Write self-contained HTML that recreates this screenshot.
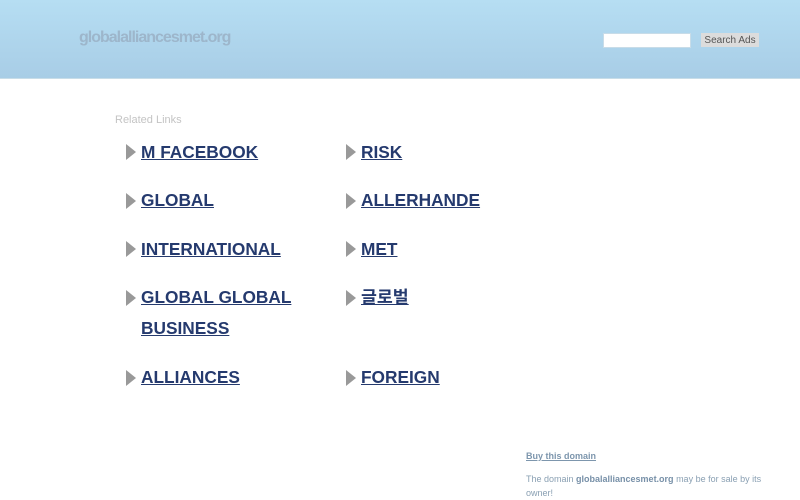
<!DOCTYPE html>
<html><head><meta charset="utf-8"><style>
body{margin:0;width:800px;height:500px;background:#fff;font-family:"Liberation Sans","Noto Sans CJK KR",sans-serif;position:relative;overflow:hidden}
.hd{position:absolute;left:0;top:0;width:800px;height:78px;background:linear-gradient(#b6def3,#a8cde6);border-bottom:1px solid #c8dde8}
.logo{position:absolute;left:79px;top:29px;font-size:16px;font-weight:bold;color:#9db6cb;letter-spacing:-1px}
.inp{position:absolute;left:603px;top:33px;width:86px;height:13px;background:#fff;border:1px solid #c8dce8}
.btn{position:absolute;left:701px;top:33px;width:58px;height:14px;background:#dcdcdc;font-size:10px;color:#555;text-align:center;line-height:16px}
.rl{position:absolute;left:115px;top:114px;font-size:11px;color:#c4c4c4}
.l{position:absolute;font-size:17.3px;font-weight:bold;color:#253a6e;text-decoration:underline;line-height:31px}
.a{position:absolute;width:0;height:0;border-top:8px solid transparent;border-bottom:8px solid transparent;border-left:10px solid #999}
.bd{position:absolute;left:526px;top:451px;font-size:9px;font-weight:bold;color:#7d96ad;text-decoration:underline}
.tx{position:absolute;left:526px;top:472px;width:236px;font-size:9px;color:#8aa0b3;line-height:14px}
.tx b{color:#7790a8}
</style></head><body>
<div class="hd"><div class="logo">globalalliancesmet.org</div><div class="inp"></div><div class="btn">Search Ads</div></div>
<div class="rl">Related Links</div>
<div class="a" style="left:126px;top:144px"></div><div class="l" style="left:141px;top:137px">M FACEBOOK</div>
<div class="a" style="left:126px;top:193px"></div><div class="l" style="left:141px;top:185px">GLOBAL</div>
<div class="a" style="left:126px;top:241px"></div><div class="l" style="left:141px;top:234px">INTERNATIONAL</div>
<div class="a" style="left:126px;top:290px"></div><div class="l" style="left:141px;top:282px">GLOBAL GLOBAL<br>BUSINESS</div>
<div class="a" style="left:126px;top:370px"></div><div class="l" style="left:141px;top:362px">ALLIANCES</div>
<div class="a" style="left:346px;top:144px"></div><div class="l" style="left:361px;top:137px">RISK</div>
<div class="a" style="left:346px;top:193px"></div><div class="l" style="left:361px;top:185px">ALLERHANDE</div>
<div class="a" style="left:346px;top:241px"></div><div class="l" style="left:361px;top:234px">MET</div>
<div class="a" style="left:346px;top:290px"></div><div class="l" style="left:361px;top:282px">글로벌</div>
<div class="a" style="left:346px;top:370px"></div><div class="l" style="left:361px;top:362px">FOREIGN</div>
<div class="bd">Buy this domain</div>
<div class="tx">The domain <b>globalalliancesmet.org</b> may be for sale by its owner!</div>
</body></html>
